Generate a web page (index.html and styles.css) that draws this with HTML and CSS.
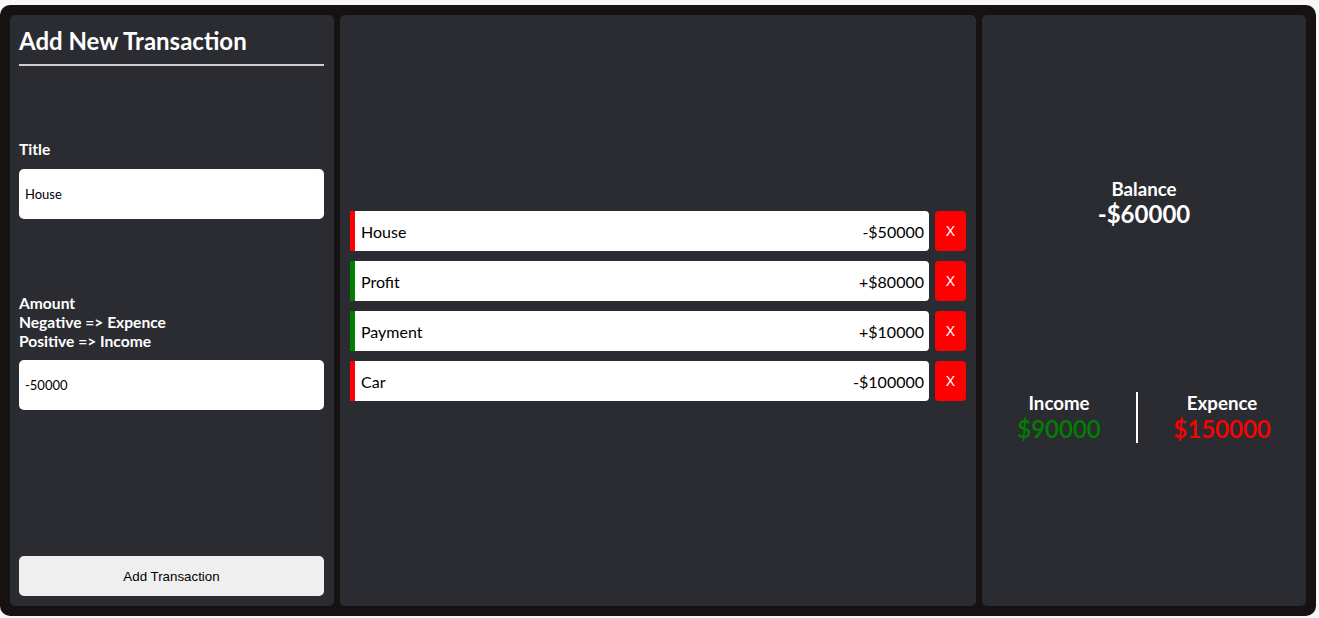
FILE: index.html
```html
<!DOCTYPE html>
<html lang="en">
<head>
<meta charset="utf-8">
<title>Expense Tracker</title>
<link rel="stylesheet" href="styles.css">
</head>
<body>
<div class="app">
  <section class="panel form-panel">
    <h2 class="form-title">Add New Transaction</h2>
    <div class="field field-title">
      <label class="field-label" for="title">Title</label>
      <input class="field-input" id="title" type="text" value="House">
    </div>
    <div class="field field-amount">
      <label class="field-label" for="amount">Amount<br>Negative =&gt; Expence<br>Positive =&gt; Income</label>
      <input class="field-input" id="amount" type="text" value="-50000">
    </div>
    <button class="add-btn" type="button">Add Transaction</button>
  </section>

  <section class="panel list-panel">
    <ul class="tx-list">
      <li class="tx">
        <div class="tx-bar tx-minus"><span class="tx-name">House</span><span class="tx-amt">-$50000</span></div>
        <button class="tx-del" type="button">X</button>
      </li>
      <li class="tx">
        <div class="tx-bar tx-plus"><span class="tx-name">Profit</span><span class="tx-amt">+$80000</span></div>
        <button class="tx-del" type="button">X</button>
      </li>
      <li class="tx">
        <div class="tx-bar tx-plus"><span class="tx-name">Payment</span><span class="tx-amt">+$10000</span></div>
        <button class="tx-del" type="button">X</button>
      </li>
      <li class="tx">
        <div class="tx-bar tx-minus"><span class="tx-name">Car</span><span class="tx-amt">-$100000</span></div>
        <button class="tx-del" type="button">X</button>
      </li>
    </ul>
  </section>

  <section class="panel summary-panel">
    <div class="balance">
      <h3 class="sum-label">Balance</h3>
      <div class="balance-amt">-$60000</div>
    </div>
    <div class="totals">
      <div class="total">
        <h3 class="sum-label">Income</h3>
        <div class="total-amt income">$90000</div>
      </div>
      <div class="total total-right">
        <h3 class="sum-label">Expence</h3>
        <div class="total-amt expence">$150000</div>
      </div>
    </div>
  </section>
</div>
</body>
</html>
```

FILE: styles.css
```css
* { box-sizing: border-box; }

html, body {
  margin: 0;
  padding: 0;
  background: #f7f7f7;
  font-family: Lato, "Noto Sans", sans-serif;
}

.app {
  margin-top: 5px;
  width: 1316px;
  height: 611px;
  padding: 10px;
  background: #161212;
  border-radius: 10px;
  display: grid;
  grid-template-columns: 324px 1fr 324px;
  gap: 6px;
}

.panel {
  background: #2b2c31;
  border-radius: 5px;
  color: #fff;
}

/* ---------- form panel ---------- */
.form-panel {
  display: flex;
  flex-direction: column;
  padding: 10px 10px 10px 9px;
}

.form-title {
  margin: 1px 0 0 0;
  font-size: 24px;
  font-weight: 700;
  line-height: 29px;
  padding-bottom: 9px;
  border-bottom: 2px solid #cfcfcf;
}

.field { display: flex; flex-direction: column; }
.field-title { margin-top: 74px; }
.field-amount { margin-top: 75px; }

.field-label {
  font-size: 15.6px;
  font-weight: 700;
  line-height: 19px;
  margin-bottom: 10px;
}

.field-amount .field-label { margin-bottom: 9px; }

.field-input {
  height: 50px;
  border: none;
  border-radius: 5px;
  background: #fff;
  padding: 0 6px;
  font-family: Lato, "Noto Sans", sans-serif;
  font-size: 13px;
  color: #000;
  outline: none;
}

.add-btn {
  margin-top: auto;
  height: 40px;
  border: none;
  border-radius: 5px;
  background: #efefef;
  font-family: "Liberation Sans", Arial, sans-serif;
  font-size: 13.33px;
  color: #000;
}

/* ---------- list panel ---------- */
.list-panel {
  display: flex;
  flex-direction: column;
  justify-content: center;
  padding: 10px;
}

.tx-list {
  list-style: none;
  margin: 0;
  padding: 0;
}

.tx {
  display: flex;
  gap: 6px;
  height: 40px;
  margin-bottom: 10px;
}

.tx-bar {
  flex: 1;
  display: flex;
  align-items: center;
  justify-content: space-between;
  background: #fff;
  color: #000;
  border-radius: 0 4px 4px 0;
  padding: 1px 5px 0 6px;
  font-size: 16px;
}

.tx-minus { border-left: 5px solid #ff0000; }
.tx-plus { border-left: 5px solid #008000; }

.tx-del {
  width: 31px;
  border: none;
  border-radius: 4px;
  background: #ff0000;
  color: #fff;
  font-family: "Liberation Sans", Arial, sans-serif;
  font-size: 14px;
  padding: 0;
}

/* ---------- summary panel ---------- */
.summary-panel {
  display: flex;
  flex-direction: column;
  justify-content: space-evenly;
  text-align: center;
}

.sum-label {
  margin: 0;
  font-size: 18.7px;
  font-weight: 700;
  line-height: 22px;
}

.balance-amt {
  font-size: 24px;
  font-weight: 700;
  line-height: 28px;
}

.totals {
  display: flex;
}

.total { flex: 1 1 auto; }

.total-right { border-left: 2px solid #fff; }

.total-amt {
  font-size: 24px;
  font-weight: 600;
  line-height: 29px;
}

.income { color: #008000; }
.expence { color: #ff0000; }
```
